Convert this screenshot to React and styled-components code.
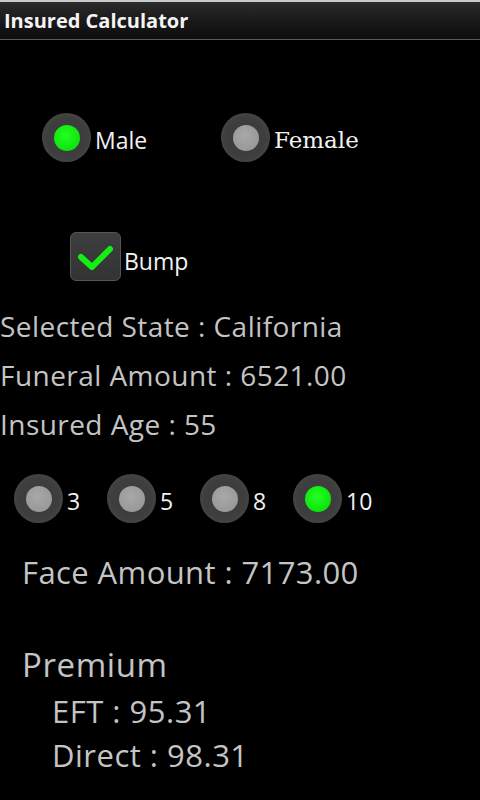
import React from "react";
import styled, { createGlobalStyle } from "styled-components";

const Global = createGlobalStyle`
  html, body { margin: 0; padding: 0; background: #000; }
  body { font-family: "Open Sans", "DejaVu Sans", sans-serif; width: 480px; height: 800px; overflow: hidden; }
`;

const Screen = styled.div`
  width: 480px;
  height: 800px;
  background: #000;
  display: flex;
  flex-direction: column;
`;

const TitleBar = styled.div`
  height: 37px;
  border-top: 2px solid #c9cccc;
  border-bottom: 1px solid #5a5a5a;
  background: linear-gradient(#2c2a2a, #141414 70%, #0e0e0e);
  display: flex;
  align-items: center;
  padding-left: 4px;
  color: #f4f4f4;
  font-weight: 700;
  font-size: 20px;
  box-sizing: content-box;
`;

const Row = styled.div`
  display: flex;
  align-items: center;
  margin-top: ${(p) => p.$top}px;
  padding-left: ${(p) => p.$left}px;
`;

const RadioItem = styled.div`
  display: flex;
  align-items: center;
  width: ${(p) => (p.$width ? `${p.$width}px` : "auto")};
`;

const RadioCircle = styled.div`
  width: 49px;
  height: 49px;
  border-radius: 50%;
  background: radial-gradient(circle, #3b3b3b 0%, #3e3e3e 58%, #4c4c4c 86%, #333 100%);
  display: flex;
  align-items: center;
  justify-content: center;
  flex: none;
`;

const Dot = styled.div`
  width: 26px;
  height: 26px;
  border-radius: 50%;
  background: ${(p) =>
    p.$on
      ? "radial-gradient(circle at 45% 40%, #22ff22, #0ee30e 70%, #0bc40b)"
      : "radial-gradient(circle at 45% 40%, #a8a8a8, #999 70%, #858585)"};
`;

const RadioLabel = styled.span`
  margin-left: ${(p) => p.$gap ?? 4}px;
  color: #f2f2f2;
  font-size: 23px;
  font-family: ${(p) =>
    p.$serif ? `"DejaVu Serif", "Liberation Serif", serif` : `"Open Sans", "DejaVu Sans", sans-serif`};
  margin-top: 4px;
`;

const CheckBox = styled.div`
  width: 49px;
  height: 47px;
  border-radius: 6px;
  border: 1px solid #555;
  background: linear-gradient(#3e3e3e, #333);
  display: flex;
  align-items: center;
  justify-content: center;
  flex: none;
`;

const CheckLabel = styled.span`
  margin-left: 3px;
  margin-top: 8px;
  color: #f2f2f2;
  font-size: 23px;
`;

const Info = styled.div`
  margin-top: ${(p) => p.$top ?? 0}px;
  padding-left: ${(p) => p.$left ?? 0}px;
  color: #c4c4c4;
  font-size: ${(p) => p.$size ?? 28}px;
  letter-spacing: ${(p) => p.$ls ?? 0.45}px;
  line-height: ${(p) => p.$lh ?? 49}px;
  white-space: nowrap;
`;

const TermRow = styled.div`
  display: grid;
  grid-template-columns: repeat(4, 93px);
  margin-top: ${(p) => p.$top}px;
  padding-left: 14px;
`;

function Radio({ label, on, serif, width }) {
  return (
    <RadioItem $width={width}>
      <RadioCircle>
        <Dot $on={on} />
      </RadioCircle>
      <RadioLabel $serif={serif}>{label}</RadioLabel>
    </RadioItem>
  );
}

export default function App() {
  return (
    <>
      <Global />
      <Screen>
        <TitleBar>Insured Calculator</TitleBar>
        <Row $top={73} $left={42}>
          <Radio label="Male" on width={179} />
          <Radio label="Female" serif />
        </Row>
        <Row $top={70} $left={70}>
          <CheckBox>
            <svg width="40" height="36" viewBox="0 0 40 36">
              <path d="M5 18 L16 28 L34 10" fill="none" stroke="#14ee14" strokeWidth="6" strokeLinecap="round" strokeLinejoin="round" />
            </svg>
          </CheckBox>
          <CheckLabel>Bump</CheckLabel>
        </Row>
        <Info $top={21}>Selected State : California</Info>
        <Info>Funeral Amount : 6521.00</Info>
        <Info>Insured Age : 55</Info>
        <TermRow $top={25}>
          <Radio label="3" />
          <Radio label="5" />
          <Radio label="8" />
          <Radio label="10" on />
        </TermRow>
        <Info $top={25} $left={22} $size={31} $ls={0.4}>Face Amount : 7173.00</Info>
        <Info $top={43} $left={22} $size={33} $ls={0.6}>Premium</Info>
        <Info $left={52} $size={31} $ls={0.5} $lh={44}>EFT : 95.31</Info>
        <Info $left={52} $size={31} $ls={0.5} $lh={44}>Direct : 98.31</Info>
      </Screen>
    </>
  );
}
